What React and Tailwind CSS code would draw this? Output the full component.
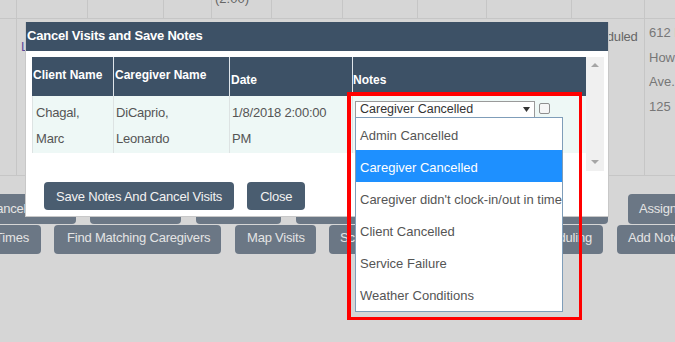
import React from "react";

const F = "font-['Liberation_Sans',Arial,sans-serif]";

function BgBtn({ className = "", children, end = false }) {
  return (
    <div
      className={`shrink-0 h-full rounded-[4px] bg-[#6b7785] text-[#e4e4e4] text-[13px] tracking-[-0.2px] flex items-center whitespace-nowrap overflow-hidden ${end ? "justify-end" : ""} ${className}`}
    >
      {children}
    </div>
  );
}

function Tri({ up = false, color = "#a5a5a5", w = 8, h = 4 }) {
  return (
    <svg width={w} height={h} viewBox={`0 0 ${w} ${h}`} className="block">
      {up ? (
        <polygon points={`0,${h} ${w},${h} ${w / 2},0`} fill={color} />
      ) : (
        <polygon points={`0,0 ${w},0 ${w / 2},${h}`} fill={color} />
      )}
    </svg>
  );
}

export default function App() {
  const topCols = [17, 71, 76, 48, 60, 71, 75, 69, 85, 73];
  const options = [
    "Admin Cancelled",
    "Caregiver Cancelled",
    "Caregiver didn't clock-in/out in time",
    "Client Cancelled",
    "Service Failure",
    "Weather Conditions",
  ];
  return (
    <div className={`relative w-[675px] h-[342px] overflow-hidden bg-[#d6d6d6] ${F}`}>
      {/* background page */}
      <div className="flex flex-col">
        <div className="flex h-[19px] border-b border-[#c6c6c6]">
          {topCols.map((w, i) => (
            <div
              key={i}
              style={{ width: w }}
              className="shrink-0 h-full border-r border-[#c6c6c6] overflow-hidden"
            >
              {i === 4 && (
                <div className="-mt-[9px] pl-[3px] text-[13px] leading-[16px] text-[#666]">(2:00)</div>
              )}
            </div>
          ))}
          <div className="flex-1" />
        </div>
        <div className="flex h-[157px] border-b border-[#c6c6c6]">
          <div className="w-[17px] shrink-0 border-r border-[#c6c6c6]" />
          <div className="w-[555px] shrink-0 pl-[4px] pt-[20px] text-[13px] leading-[16px] text-[#5a4a9c]">
            Lopez, Maria
          </div>
          <div className="w-[73px] shrink-0 border-r border-[#c6c6c6] pl-[6px] pt-[10px] text-[13px] tracking-[-0.2px] leading-[16px] text-[#666]">
            Scheduled
          </div>
          <div className="flex-1 pl-[4px] pt-[2px] text-[13px] leading-[24.5px] text-[#777] whitespace-nowrap overflow-hidden">
            <div>
              612 <span className="text-[#d9a066]">H</span>
            </div>
            <div>Howard</div>
            <div>Ave.</div>
            <div>125</div>
          </div>
        </div>
        <div className="h-[18px]" />
        <div className="flex h-[30px]">
          <BgBtn className="-ml-[25px] w-[101px] pl-[12px]">Cancel Visits</BgBtn>
          <BgBtn className="ml-[14px] w-[91px] pl-[11px]">Copy Visits</BgBtn>
          <BgBtn className="ml-[15px] w-[85px] pl-[11px]">Delete</BgBtn>
          <BgBtn className="ml-[15px] w-[150px] pl-[11px]">Change Caregiver</BgBtn>
          <BgBtn className="ml-[14px] w-[148px] pl-[11px]">Change Status</BgBtn>
          <BgBtn className="ml-[20px] w-[110px] pl-[11px]">Assign Caregiver</BgBtn>
        </div>
        <div className="flex h-[29px] mt-[1px]">
          <BgBtn end className="-ml-[60px] w-[101px] pr-[12px] pb-[3px]">Edit Times</BgBtn>
          <BgBtn className="ml-[13px] w-[167px] pl-[13px] pb-[3px]">Find Matching Caregivers</BgBtn>
          <BgBtn className="ml-[14px] w-[81px] pl-[12px] pb-[3px]">Map Visits</BgBtn>
          <BgBtn className="ml-[13px] w-[110px] pl-[11px] pb-[3px]">Schedule Visits</BgBtn>
          <BgBtn end className="ml-[14px] w-[150px] pr-[11px] pb-[3px]">Auto Scheduling</BgBtn>
          <BgBtn className="ml-[14px] w-[100px] pl-[11px] pb-[3px]">Add Notes</BgBtn>
        </div>
      </div>

      {/* dialog */}
      <div className="absolute left-[25px] top-[22px] w-[584px] h-[195px] bg-white border-x border-b border-[#c8c8c8] flex flex-col">
        <div className="h-[29px] shrink-0 bg-[#3d5166] flex items-center pb-[2px] pl-[1px] text-white font-bold text-[13px] tracking-[-0.2px]">
          Cancel Visits and Save Notes
        </div>
        <div className="pl-[6px] pt-[6px]">
          <div className="flex h-[114px] w-[572px]">
            <div className="w-[554px] flex flex-col">
              <div className="flex h-[39px] bg-[#3d5166] text-white font-bold text-[12px]">
                <div className="w-[81px] flex items-center pb-[3px] pl-[1px]">Client Name</div>
                <div className="w-[116px] flex items-center pb-[3px] pl-[1px] border-l border-[#dfe5ea]">Caregiver Name</div>
                <div className="w-[123px] flex items-center pt-[7px] pl-[1px] border-l border-[#dfe5ea]">Date</div>
                <div className="w-[234px] flex items-center pt-[7px] border-l border-[#dfe5ea]">Notes</div>
              </div>
              <div className="flex h-[57px] bg-[#eef8f6] text-[13px] tracking-[-0.2px] leading-[26px] text-[#555] border-l border-[#dde3e3]">
                <div className="w-[80px] pl-[3px] pt-[4px]">
                  <div>Chagal,</div>
                  <div>Marc</div>
                </div>
                <div className="w-[116px] pl-[2px] pt-[4px] border-l border-[#dde3e3]">
                  <div>DiCaprio,</div>
                  <div>Leonardo</div>
                </div>
                <div className="w-[123px] pl-[2px] pt-[4px] border-l border-[#dde3e3]">
                  <div>1/8/2018 2:00:00</div>
                  <div>PM</div>
                </div>
                <div className="w-[234px] pl-[2px] pt-[5px] border-l border-[#dde3e3] flex items-start">
                  <div className="w-[180px] h-[17px] border border-[#9a9a9a] bg-white flex items-center justify-between pl-[4px] pr-[4px] text-[12.5px] leading-[15px] tracking-normal text-[#333]">
                    <span>Caregiver Cancelled</span>
                    <Tri color="#333" w={7} h={5} />
                  </div>
                  <div className="ml-[4px] mt-[2px] w-[11px] h-[11px] rounded-[2px] border border-[#8f8f8f] bg-[#f6f6f6]" />
                </div>
              </div>
            </div>
            <div className="w-[18px] bg-[#f0f0f0] flex flex-col items-center justify-between pt-[6px] pb-[7px]">
              <Tri up />
              <Tri />
            </div>
          </div>
          <div className="flex mt-[11px] ml-[12px] gap-[13px]">
            <div className="h-[28px] rounded-[4px] bg-[#4a5d70] text-[#f2f2f2] text-[13px] tracking-[-0.2px] flex items-center px-[12px] pt-[1px]">
              Save Notes And Cancel Visits
            </div>
            <div className="h-[28px] rounded-[4px] bg-[#4a5d70] text-[#f2f2f2] text-[13px] tracking-[-0.2px] flex items-center px-[13px] pt-[1px]">
              Close
            </div>
          </div>
        </div>
      </div>

      {/* dropdown list */}
      <div className="absolute left-[355px] top-[117px] w-[208px] h-[195px] bg-white border border-[#7f9db9] flex flex-col">
        {options.map((o, i) => (
          <div
            key={o}
            className={`h-[32px] shrink-0 flex items-center pl-[4px] pt-[4px] text-[13px] whitespace-nowrap ${
              i === 1 ? "bg-[#1e90ff] text-white" : "text-[#555]"
            }`}
          >
            {o}
          </div>
        ))}
      </div>

      {/* red annotation box */}
      <div className="absolute left-[347px] top-[92px] w-[235px] h-[228px] border-[#ff0000] border-t-4 border-l-4 border-r-[3px] border-b-[3px]" />
    </div>
  );
}
